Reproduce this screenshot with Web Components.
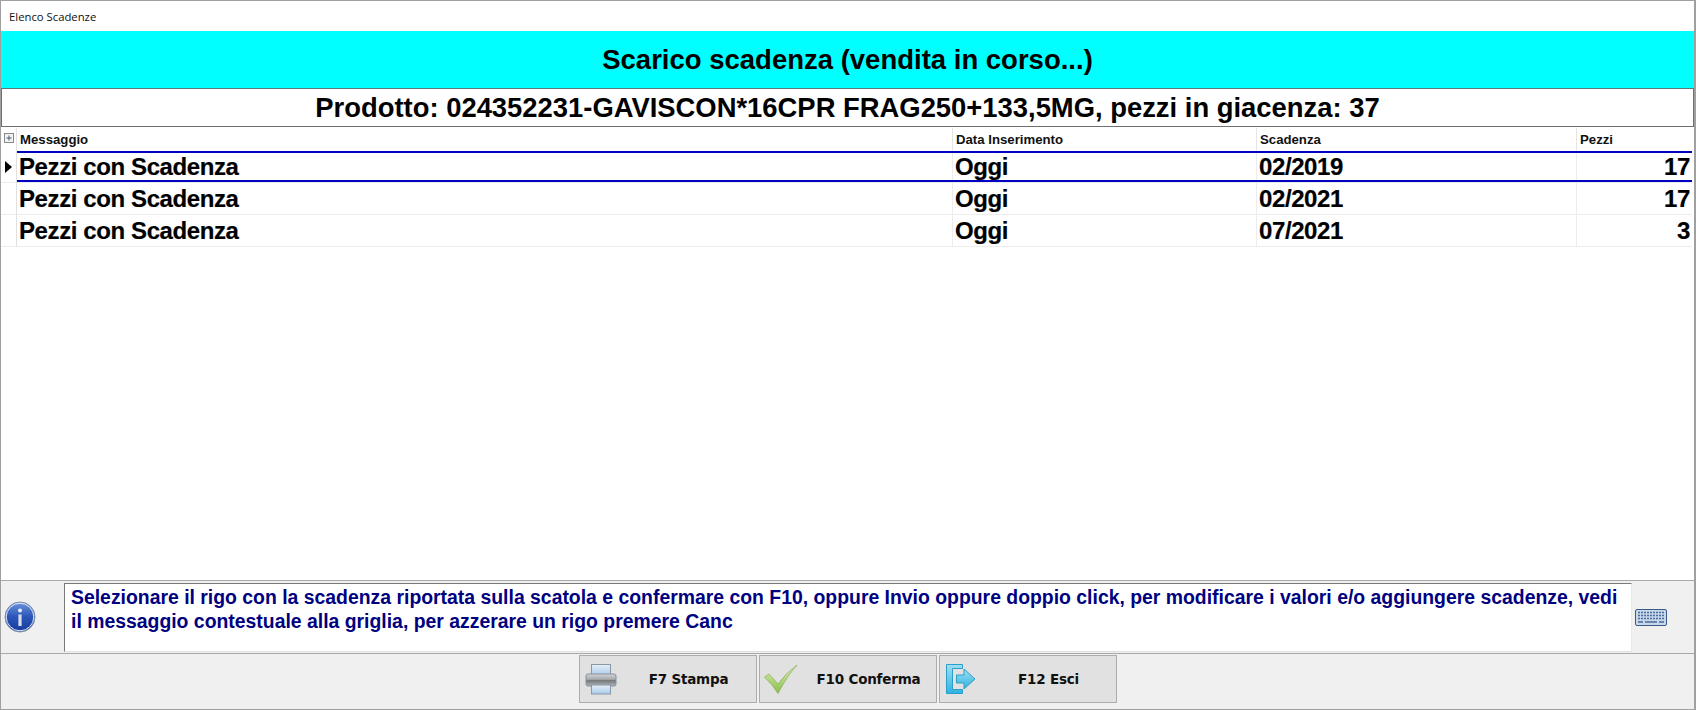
<!DOCTYPE html>
<html lang="it">
<head>
<meta charset="utf-8">
<title>Elenco Scadenze</title>
<style>
html, body { margin: 0; height: 100%; background: #fff; overflow: hidden; }
</style>
</head>
<body>
<scadenze-window></scadenze-window>

<script>
// griglia colonne condivisa tra testata e righe
const COLS = '16px 936px 304px 320px 115px';

class TitleBar extends HTMLElement {
    constructor() {
        super();
        this.attachShadow({ mode: 'open' });
        this.shadowRoot.innerHTML = `
<style>
:host { display: flex; align-items: center; height: 30px; padding: 0 0 0 8px; background: #fff;
    font: 11.3px "Open Sans", "Noto Sans", sans-serif; color: #111; flex: none; }
</style>
<slot></slot>`;
    }
}

class CaptionBand extends HTMLElement {
    constructor() {
        super();
        this.attachShadow({ mode: 'open' });
        this.shadowRoot.innerHTML = `
<style>
:host { display: flex; align-items: center; justify-content: center; height: 57px; background: #00ffff;
    font: bold 27.5px "Liberation Sans", Arial, sans-serif; color: #000; flex: none; }
</style>
<slot></slot>`;
    }
}

class ProductBox extends HTMLElement {
    constructor() {
        super();
        this.attachShadow({ mode: 'open' });
        this.shadowRoot.innerHTML = `
<style>
:host { display: flex; align-items: center; justify-content: center; height: 37px;
    border: 1px solid #6f6f6f; border-top-color: #5c7a7a; background: #fff;
    font: bold 27.4px "Liberation Sans", Arial, sans-serif; color: #000; flex: none; }
</style>
<slot></slot>`;
    }
}

class GridHeader extends HTMLElement {
    constructor() {
        super();
        this.attachShadow({ mode: 'open' });
        this.shadowRoot.innerHTML = `
<style>
:host { display: grid; grid-template-columns: ${COLS}; height: 23px; flex: none;
    font: bold 13.2px "Liberation Sans", Arial, sans-serif; color: #111; }
div { border-right: 1px solid #e4e4e4; padding-left: 3px; line-height: 24px; box-sizing: border-box; white-space: nowrap; }
.exp { padding: 0; display: flex; justify-content: center; padding-top: 5px; }
.exp svg { display: block; }
.msg { padding-left: 3px; }
.last { border-right: 0; }
</style>
<div class="exp"><svg width="10" height="10" viewBox="0 0 10 10">
  <rect x=".5" y=".5" width="9" height="9" fill="#f2f2f2" stroke="#8a8a8a"/>
  <path d="M2.5 5h5M5 2.5v5" stroke="#4a5a7a" fill="none"/>
</svg></div>
<div class="msg">Messaggio</div>
<div>Data Inserimento</div>
<div>Scadenza</div>
<div class="last">Pezzi</div>`;
    }
}

class GridRow extends HTMLElement {
    constructor() {
        super();
        this.attachShadow({ mode: 'open' });
        const sel = this.hasAttribute('selected');
        this.shadowRoot.innerHTML = `
<style>
:host { display: grid; grid-template-columns: ${COLS}; height: 32px; flex: none; position: relative;
    font: bold 24px "Liberation Sans", Arial, sans-serif; letter-spacing: -.4px; color: #000;
    -webkit-text-stroke: .2px #000; }
div { border-right: 1px solid #ececec; border-bottom: 1px solid #ececec; box-sizing: border-box;
    padding-left: 2px; line-height: 31px; white-space: nowrap; overflow: hidden; }
.ind { padding: 0; display: flex; align-items: center; justify-content: center; border-right-color: #e0e0e0; }
.num { text-align: right; padding: 0 2px 0 0; border-right: 0; }
.sel-line { position: absolute; left: 16px; right: 2px; height: 2px; background: #0000c0; padding: 0; border: 0; }
.top { top: 0; }
.bottom { bottom: 1px; }
</style>
<div class="ind">${sel ? '<svg width="7" height="12" viewBox="0 0 7 12"><path d="M0 0l7 6-7 6z" fill="#000"/></svg>' : ''}</div>
<div>${this.getAttribute('msg')}</div>
<div>${this.getAttribute('data')}</div>
<div>${this.getAttribute('scad')}</div>
<div class="num">${this.getAttribute('pezzi')}</div>
${sel ? '<div class="sel-line top"></div><div class="sel-line bottom"></div>' : ''}`;
    }
}

class DataGrid extends HTMLElement {
    constructor() {
        super();
        this.attachShadow({ mode: 'open' });
        this.shadowRoot.innerHTML = `
<style>
:host { display: flex; flex-direction: column; flex: 1; min-height: 0; background: #fff; margin-top: 1px; }
</style>
<slot></slot>`;
    }
}

class MessageBar extends HTMLElement {
    constructor() {
        super();
        this.attachShadow({ mode: 'open' });
        this.shadowRoot.innerHTML = `
<style>
:host { display: grid; grid-template-columns: 63px 1fr 62px; height: 72px; flex: none; background: #f0f0f0;
    border-top: 1px solid #a8a8a8; border-bottom: 1px solid #a8a8a8; }
.icon { display: flex; align-items: center; justify-content: flex-start; padding-left: 3px; }
.icon svg, .kbd svg { display: block; }
.txt { margin-top: 2px; border-top: 1px solid #7a7a7a; border-left: 1px solid #7a7a7a; border-bottom: 1px solid #e0e0e0;
    border-right: 1px solid #e8e8e8; background: #fff; padding: 1px 6px; box-sizing: border-box; height: 69px;
    font: bold 19.4px/24px "Liberation Sans", Arial, sans-serif; color: #000080; }
.kbd { display: flex; align-items: center; justify-content: flex-start; padding-left: 3px; padding-top: 1px; }
</style>
<div class="icon"><svg width="32" height="32" viewBox="0 0 32 32">
  <defs><linearGradient id="b" x1="0" y1="0" x2="0" y2="1">
    <stop offset="0" stop-color="#6f95dc"/><stop offset=".5" stop-color="#2a55b8"/><stop offset="1" stop-color="#173b9a"/>
  </linearGradient></defs>
  <circle cx="16" cy="16" r="15" fill="url(#b)" stroke="#8090a8" stroke-width="1"/>
  <circle cx="16" cy="16" r="13.8" fill="none" stroke="#e4ebf6" stroke-width="1"/>
  <circle cx="16" cy="9.5" r="2" fill="#e8eef8"/>
  <path d="M14.4 13.5h3.2v11.5h-3.2z" fill="#d8dfea"/>
</svg></div>
<div class="txt"><slot></slot></div>
<div class="kbd"><svg width="32" height="17" viewBox="0 0 32 17">
  <rect x=".5" y=".5" width="31" height="16" rx="1.5" fill="#c7d8ec" stroke="#3d5a86"/>
  <path d="M3 3.5h26M3 6.5h26M3 9.5h26" stroke="#4c6a96" stroke-width="1.6" stroke-dasharray="2 1" fill="none"/>
  <path d="M3 13h5M10 13h12M24 13h5" stroke="#4c6a96" stroke-width="1.6" fill="none"/>
</svg></div>`;
    }
}

class ToolButton extends HTMLElement {
    constructor() {
        super();
        this.attachShadow({ mode: 'open' });
        this.shadowRoot.innerHTML = `
<style>
:host { display: block; width: 178px; height: 48px; box-sizing: border-box; position: relative;
    background: #e1e1e1; border: 1px solid #adadad;
    font: bold 13.5px "DejaVu Sans", Verdana, sans-serif; color: #111; flex: none; }
.in { display: grid; grid-template-columns: 42px 1fr; align-items: center; height: 100%; }
.ic { display: flex; justify-content: center; }
.lb { text-align: center; white-space: nowrap; letter-spacing: -.2px; }
::slotted(svg) { display: block; }
</style>
<div class="in"><div class="ic"><slot name="icon"></slot></div><div class="lb"><slot></slot></div></div>`;
    }
}

class ButtonBar extends HTMLElement {
    constructor() {
        super();
        this.attachShadow({ mode: 'open' });
        this.shadowRoot.innerHTML = `
<style>
:host { display: flex; justify-content: center; gap: 2px; flex: none; height: 54px; padding: 1px 0 0 0; background: #f0f0f0; }
</style>
<slot></slot>`;
    }
}

class ScadenzeWindow extends HTMLElement {
    constructor() {
        super();
        this.attachShadow({ mode: 'open' });
        this.shadowRoot.innerHTML = `
<style>
:host { display: flex; flex-direction: column; width: 1696px; height: 710px; box-sizing: border-box;
    border: 1px solid #a0a0a0; border-right-width: 2px; border-bottom-width: 1px; background: #fff; overflow: hidden; }
</style>
<title-bar>Elenco Scadenze</title-bar>
<caption-band>Scarico scadenza (vendita in corso...)</caption-band>
<product-box>Prodotto: 024352231-GAVISCON*16CPR FRAG250+133,5MG, pezzi in giacenza: 37</product-box>
<data-grid>
  <grid-header></grid-header>
  <grid-row selected msg="Pezzi con Scadenza" data="Oggi" scad="02/2019" pezzi="17"></grid-row>
  <grid-row msg="Pezzi con Scadenza" data="Oggi" scad="02/2021" pezzi="17"></grid-row>
  <grid-row msg="Pezzi con Scadenza" data="Oggi" scad="07/2021" pezzi="3"></grid-row>
</data-grid>
<message-bar>Selezionare il rigo con la scadenza riportata sulla scatola e confermare con F10, oppure Invio oppure doppio click, per modificare i valori e/o aggiungere scadenze, vedi il messaggio contestuale alla griglia, per azzerare un rigo premere Canc</message-bar>
<button-bar>
  <tool-button>
    <svg slot="icon" width="32" height="32" viewBox="0 0 32 32">
      <defs>
        <linearGradient id="p" x1="0" y1="0" x2="0" y2="1"><stop offset="0" stop-color="#e6edf5"/><stop offset="1" stop-color="#a9cbee"/></linearGradient>
        <linearGradient id="g" x1="0" y1="0" x2="0" y2="1"><stop offset="0" stop-color="#d5d8da"/><stop offset=".45" stop-color="#a4a8ab"/><stop offset=".55" stop-color="#74787b"/><stop offset="1" stop-color="#b4b8bb"/></linearGradient>
      </defs>
      <rect x="6.5" y="1.5" width="19" height="11" fill="url(#p)" stroke="#8a97a5"/>
      <rect x="1" y="11" width="30" height="12" rx="2" fill="url(#g)" stroke="#8a9095"/>
      <rect x="6.5" y="22" width="19" height="9" fill="url(#p)" stroke="#8a97a5"/>
    </svg>
    F7 Stampa
  </tool-button>
  <tool-button>
    <svg slot="icon" width="34" height="30" viewBox="0 0 34 30">
      <defs><linearGradient id="c" x1="0" y1="0" x2="0" y2="1"><stop offset="0" stop-color="#e2f2b4"/><stop offset="1" stop-color="#86bd4a"/></linearGradient></defs>
      <path d="M.5 13L5 10l9 10Q22 9 33 1 23 12 14 29.5 8 20 .5 13z" fill="url(#c)" stroke="#8db25f" stroke-width=".8"/>
    </svg>
    F10 Conferma
  </tool-button>
  <tool-button>
    <svg slot="icon" width="32" height="32" viewBox="0 0 32 32">
      <defs><linearGradient id="e" x1="0" y1="0" x2="0" y2="1"><stop offset="0" stop-color="#9fdff2"/><stop offset="1" stop-color="#2fb2e0"/></linearGradient></defs>
      <path d="M1.5 1.5h16v4h-10v21h10v4h-16z" fill="url(#e)" stroke="#2a9fca"/>
      <path d="M11.5 12h7.5V6l11 10-11 10v-6h-7.5z" fill="url(#e)" stroke="#2a9fca"/>
    </svg>
    F12 Esci
  </tool-button>
</button-bar>`;
    }
}

customElements.define('title-bar', TitleBar);
customElements.define('caption-band', CaptionBand);
customElements.define('product-box', ProductBox);
customElements.define('grid-header', GridHeader);
customElements.define('grid-row', GridRow);
customElements.define('data-grid', DataGrid);
customElements.define('message-bar', MessageBar);
customElements.define('tool-button', ToolButton);
customElements.define('button-bar', ButtonBar);
customElements.define('scadenze-window', ScadenzeWindow);
</script>
</body>
</html>
